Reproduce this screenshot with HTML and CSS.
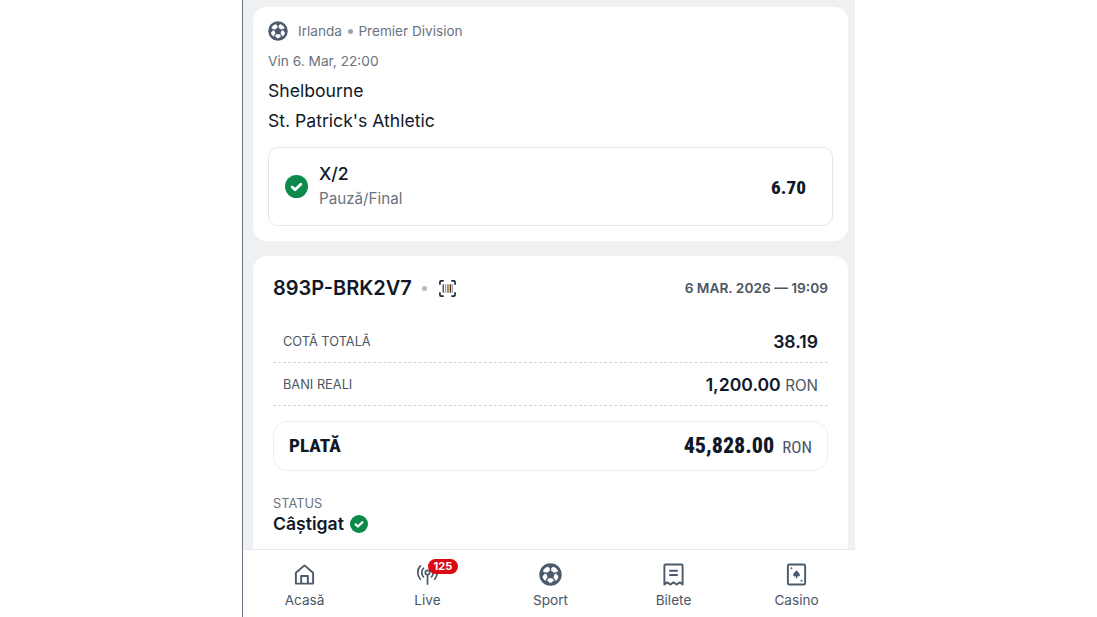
FILE: index.html

```html
<!DOCTYPE html>
<html lang="en">
<head>
  <meta charset="UTF-8" />
  <meta name="viewport" content="width=device-width, initial-scale=1" />
  <title>Bilet</title>
  <link rel="stylesheet" href="styles.css">
</head>
<body>
  <div class="shell">
    <main class="content">
      <section class="card event">
        <div class="league">
          <svg class="ball-small" viewBox="0 0 24 24"><use href="#ball"></use></svg>
          <span>Irlanda</span><i class="dot-sep"></i><span>Premier Division</span>
        </div>
        <div class="when">Vin 6. Mar, 22:00</div>
        <div class="team">Shelbourne</div>
        <div class="team">St. Patrick's Athletic</div>
        <div class="pick">
          <svg class="check" viewBox="0 0 24 24"><use href="#check"></use></svg>
          <div class="pick-text">
            <div class="pick-name">X/2</div>
            <div class="pick-market">Pauză/Final</div>
          </div>
          <div class="pick-odd narrow">6.70</div>
        </div>
      </section>

      <section class="card ticket">
        <div class="ticket-head">
          <span class="code">893P-BRK2V7</span>
          <i class="dot-grey"></i>
          <svg class="barcode" viewBox="0 0 18 18" fill="none">
            <path d="M1 5V2.2C1 1.5 1.5 1 2.2 1H5M13 1h2.8c.7 0 1.2.5 1.2 1.2V5M17 13v2.8c0 .7-.5 1.2-1.2 1.2H13M5 17H2.2C1.500 17 1 16.500 1 15.800V13" stroke="#1f2937" stroke-width="1.800"/>
            <path d="M4.500 4.500v9" stroke="#374151" stroke-width="1.300"/>
            <path d="M7 4.500v9" stroke="#9ca3af" stroke-width="1.300"/>
            <path d="M9.500 4.500v9" stroke="#a16207" stroke-width="1.500"/>
            <path d="M12 4.500v9" stroke="#1f2937" stroke-width="1.300"/>
            <path d="M14 4.500v9" stroke="#6b7280" stroke-width="1"/>
          </svg>
          <span class="stamp">6 MAR. 2026 — 19:09</span>
        </div>
        <div class="row">
          <span class="row-label">COTĂ TOTALĂ</span>
          <span class="row-value">38.19</span>
        </div>
        <div class="row">
          <span class="row-label">BANI REALI</span>
          <span class="row-value">1,200.00 <small>RON</small></span>
        </div>
        <div class="payout narrow">
          <span class="payout-label">PLATĂ</span>
          <span class="payout-value">45,828.00 <small>RON</small></span>
        </div>
        <div class="status-label">STATUS</div>
        <div class="status">
          <span>Câștigat</span>
          <svg class="check-small" viewBox="0 0 24 24"><use href="#check"></use></svg>
        </div>
      </section>
    </main>

    <nav class="tabs">
      <a class="tab">
        <svg viewBox="0 0 24 24" fill="none" stroke="#4b5b6b" stroke-width="2" stroke-linejoin="round">
          <path d="M3 21.500V10.200L12 2.500l9 7.700v11.300z"/>
          <path d="M8.500 21.500V13.500h7v8"/>
        </svg>
        <span>Acasă</span>
      </a>
      <a class="tab">
        <svg viewBox="0 0 24 24" fill="none" stroke="#4b5b6b" stroke-width="1.800" stroke-linecap="round">
          <circle cx="12" cy="10" r="2.300"/>
          <path d="M12 12.500V22"/>
          <path d="M7.800 14.500a6.500 6.500 0 0 1 0-9M16.200 14.500a6.500 6.500 0 0 0 0-9"/>
          <path d="M4.500 17a10.500 10.500 0 0 1 0-14M19.500 17a10.500 10.500 0 0 0 0-14"/>
        </svg>
        <span>Live</span>
        <b class="badge">125</b>
      </a>
      <a class="tab">
        <svg viewBox="0 0 24 24"><use href="#ball"></use></svg>
        <span>Sport</span>
      </a>
      <a class="tab">
        <svg viewBox="0 0 24 24" fill="none" stroke="#4b5b6b" stroke-width="2" stroke-linejoin="round">
          <path d="M2.500 22.500V2.500c0-.6.400-1 1-1h17c.6 0 1 .4 1 1v20l-3-2.300-3.200 2.300-3.300-2.300-3.300 2.300-3.200-2.300z"/>
          <path d="M7.500 8h9M7.500 12.500h9"/>
        </svg>
        <span>Bilete</span>
      </a>
      <a class="tab">
        <svg viewBox="0 0 24 24" fill="none">
          <rect x="3" y="1.500" width="18" height="21" rx="1.500" stroke="#4b5b6b" stroke-width="2"/>
          <path d="M12 7.500c1.200 1.700 3.500 2.900 3.500 4.900 0 1.500-1.800 2.200-3 1.200l.6 2.400h-2.200l.6-2.400c-1.200 1-3 .3-3-1.200 0-2 2.300-3.200 3.500-4.900z" fill="#4b5b6b"/>
          <circle cx="6.800" cy="5.500" r="1" fill="#4b5b6b"/>
          <circle cx="17.200" cy="18.500" r="1" fill="#4b5b6b"/>
        </svg>
        <span>Casino</span>
      </a>
    </nav>
  </div>

  <svg class="defs" aria-hidden="true">
    <symbol id="ball" viewBox="0 0 24 24">
      <circle cx="12" cy="12" r="10.200" fill="#fff" stroke="#4b5b6b" stroke-width="3"/>
      <path d="M12 7.500l4.500 3.300-1.700 5.200H9.200l-1.700-5.200z" fill="#4b5b6b"/>
      <path d="M12 8V3M16 10.900l5-1.600M14.500 15.600l3 4.200M9.500 15.600l-3 4.200M8 10.900L3 9.300" stroke="#4b5b6b" stroke-width="1.500"/>
      <path d="M7.500 2.500h9L12 6zM21.800 7l.2 8.500-4-4zM20 18.500l-7 4.500 1-4zM4 18.500l7 4.500-1-4zM2.200 7L2 15.500l4-4z" fill="#4b5b6b"/>
    </symbol>
    <symbol id="check" viewBox="0 0 24 24">
      <circle cx="12" cy="12" r="12" fill="#0b8a4b"/>
      <path d="M7.500 12.500l3 2.900 6-5.800" fill="none" stroke="#fff" stroke-width="3" stroke-linecap="round" stroke-linejoin="round"/>
    </symbol>
  </svg>
</body>
</html>
```

FILE: styles.css

```css
html, body {
  margin: 0;
  height: 100%;
  overflow: hidden;
  background: #fff;
}
body {
  font-family: Inter, "Liberation Sans", sans-serif;
  color: #111827;
}
.defs {
  display: none;
}
.shell {
  width: 612px;
  height: 617px;
  margin-left: 242px;
  border-left: 1px solid #6b7280;
  background: #eef0f2;
  display: flex;
  flex-direction: column;
}
.content {
  flex: 1;
  min-height: 0;
  overflow: hidden;
  padding: 7px 7px 0 10px;
}
.card {
  background: #fff;
  border-radius: 14px;
}
.event {
  height: 234px;
  box-sizing: border-box;
  padding: 14px 15px 0;
  margin-bottom: 15px;
}
.league {
  display: flex;
  align-items: center;
  height: 20px;
  font-size: 13.600px;
  color: #6b7280;
}
.ball-small {
  width: 20px;
  height: 20px;
  margin-right: 10px;
}
.dot-sep {
  width: 5px;
  height: 5px;
  margin: 0 5.500px 0 6px;
  border-radius: 50%;
  background: #9ca3af;
}
.when {
  margin-top: 10px;
  font-size: 13.700px;
  line-height: 20px;
  color: #6b7280;
}
.team {
  margin-top: 5px;
  font-size: 17.600px;
  line-height: 25px;
  color: #111827;
}
.when + .team {
  margin-top: 7px;
}
.pick {
  display: flex;
  align-items: center;
  height: 79px;
  box-sizing: border-box;
  margin-top: 14px;
  padding: 0 26px 0 16px;
  border: 1px solid #e5e7eb;
  border-radius: 10px;
}
.check {
  width: 23px;
  height: 23px;
  margin-right: 11px;
}
.pick-text {
  flex: 1;
  margin-top: -1px;
}
.pick-name {
  font-size: 17.600px;
  font-weight: 500;
  line-height: 25px;
}
.pick-market {
  font-size: 15.200px;
  line-height: 26px;
  color: #6b7280;
}
.narrow {
  font-family: "Roboto Condensed", "Liberation Sans Narrow", Roboto, sans-serif;
  font-stretch: condensed;
}
.pick-odd {
  margin-top: 2px;
  font-size: 19.200px;
  font-weight: 800;
}
.ticket {
  height: 320px;
  box-sizing: border-box;
  padding: 20px 20px 0;
}
.ticket-head {
  display: flex;
  align-items: center;
  height: 24px;
  margin-bottom: 20px;
}
.code {
  font-size: 20px;
  font-weight: 600;
}
.dot-grey {
  width: 5px;
  height: 5px;
  margin: 0 12px 0 10px;
  border-radius: 50%;
  background: #b4b8be;
}
.barcode {
  width: 17px;
  height: 17px;
}
.stamp {
  margin-left: auto;
  font-size: 13.700px;
  font-weight: 600;
  color: #4b5563;
}
.row {
  display: flex;
  align-items: center;
  justify-content: space-between;
  height: 43px;
  box-sizing: border-box;
  padding: 0 10px;
  border-bottom: 1px dashed #d1d5db;
}
.row-label {
  font-size: 12.800px;
  color: #4b5563;
}
.row-value {
  font-size: 17.600px;
  font-weight: 600;
}
.row-value small {
  font-size: 15.200px;
  font-weight: 400;
  color: #4b5563;
}
.payout {
  display: flex;
  align-items: center;
  justify-content: space-between;
  height: 50px;
  box-sizing: border-box;
  margin-top: 15px;
  padding: 0 15px 2px;
  border: 1px solid #eceef0;
  border-radius: 14px;
}
.payout-label {
  font-size: 19.200px;
  font-weight: 800;
}
.payout-value {
  font-size: 22px;
  font-weight: 800;
}
.payout-value small {
  margin-left: 3px;
  font-size: 17px;
  font-weight: 400;
  color: #4b5563;
}
.status-label {
  margin-top: 25px;
  font-size: 12.800px;
  line-height: 16px;
  color: #6b7280;
}
.status {
  display: flex;
  align-items: center;
  gap: 6px;
  font-size: 17.600px;
  font-weight: 600;
  line-height: 24px;
}
.check-small {
  width: 18px;
  height: 18px;
}
.tabs {
  display: grid;
  grid-template-columns: repeat(5, 123px);
  height: 67px;
  flex: none;
  overflow: hidden;
  background: #fff;
  border-top: 1px solid #e5e7eb;
}
.tab {
  position: relative;
  display: flex;
  flex-direction: column;
  align-items: center;
  padding-top: 13px;
  font-size: 13.600px;
  color: #4b5563;
}
.tab svg {
  width: 23px;
  height: 23px;
  margin-bottom: 6px;
}
.badge {
  position: absolute;
  top: 9px;
  left: 62px;
  padding: 0 5.500px;
  font-size: 11px;
  line-height: 15px;
  color: #fff;
  background: #dc0a14;
  border-radius: 8px;
}
```
